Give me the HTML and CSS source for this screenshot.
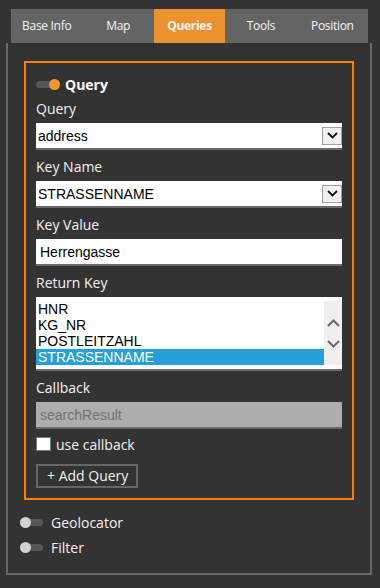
FILE: index.html
```html
<!DOCTYPE html>
<html lang="en">
<head>
    <meta charset="UTF-8">
    <meta name="viewport" content="width=device-width, initial-scale=1.0">
    <title>Queries</title>
    <link rel="stylesheet" href="styles.css">
</head>
<body>
<div class="settings">
    <div class="tabs">
        <div class="tab">Base Info</div>
        <div class="tab">Map</div>
        <div class="tab active">Queries</div>
        <div class="tab">Tools</div>
        <div class="tab">Position</div>
    </div>

    <div class="panel">
        <div class="query-box">
            <div class="section-title">
                <span class="toggle on"></span>
                Query
            </div>

            <div class="field-label first">Query</div>
            <div class="select">
                <span>address</span>
                <span class="select-arrow">
                    <svg width="11" height="7" viewBox="0 0 11 7"><path d="M1 1l4.5 4.5L10 1" fill="none" stroke="#111" stroke-width="1.8"/></svg>
                </span>
            </div>

            <div class="field-label">Key Name</div>
            <div class="select">
                <span>STRASSENNAME</span>
                <span class="select-arrow">
                    <svg width="11" height="7" viewBox="0 0 11 7"><path d="M1 1l4.5 4.5L10 1" fill="none" stroke="#111" stroke-width="1.8"/></svg>
                </span>
            </div>

            <div class="field-label">Key Value</div>
            <div class="input">Herrengasse</div>

            <div class="field-label">Return Key</div>
            <div class="listbox">
                <div class="list-items">
                    <div class="list-item">HNR</div>
                    <div class="list-item">KG_NR</div>
                    <div class="list-item">POSTLEITZAHL</div>
                    <div class="list-item selected">STRASSENNAME</div>
                </div>
                <div class="list-scroll">
                    <svg width="13" height="8" viewBox="0 0 13 8"><path d="M1 7l5.5-5.5L12 7" fill="none" stroke="#6a6a6a" stroke-width="2"/></svg>
                    <svg width="13" height="8" viewBox="0 0 13 8"><path d="M1 1l5.5 5.5L12 1" fill="none" stroke="#6a6a6a" stroke-width="2"/></svg>
                </div>
            </div>

            <div class="field-label">Callback</div>
            <div class="input disabled">searchResult</div>

            <div class="check-row">
                <span class="checkbox"></span>
                use callback
            </div>

            <div class="add-button">+ Add Query</div>
        </div>

        <div class="switch-row first">
            <span class="toggle"></span>
            Geolocator
        </div>
        <div class="switch-row">
            <span class="toggle"></span>
            Filter
        </div>
    </div>
</div>
</body>
</html>
```

FILE: styles.css
```css
* {
    margin: 0;
    padding: 0;
    box-sizing: border-box;
}

body {
    background: #333;
    font-family: "Open Sans", "Noto Sans", sans-serif;
    color: #f2f2f2;
}

.settings {
    padding-top: 9px;
}

.tabs {
    display: flex;
    height: 34px;
    margin: 0 12px 0 11px;
    background: #646464;
}

.tab {
    flex: 1;
    text-align: center;
    line-height: 34px;
    font-size: 12px;
    letter-spacing: -0.3px;
    color: #f4f4f4;
}

.tab.active {
    background: #ec932f;
    font-weight: 700;
}

.panel {
    margin: 0 8px 0 6px;
    border: 2px solid #686868;
    border-top: none;
    padding: 18px 16px 13px;
}

.query-box {
    border: 2px solid #ff8000;
    padding: 11px 10px 10px;
}

.section-title {
    display: flex;
    align-items: center;
    gap: 5px;
    height: 20px;
    font-size: 14px;
    font-weight: 700;
    color: #fff;
}

/* small on/off switch */
.toggle {
    position: relative;
    display: inline-block;
    width: 24px;
    height: 11px;
}

.toggle::before {
    content: "";
    position: absolute;
    left: 0;
    right: 1px;
    top: 2px;
    height: 7px;
    border-radius: 4px;
    background: #575757;
}

.toggle::after {
    content: "";
    position: absolute;
    left: 0;
    top: 0;
    width: 11px;
    height: 11px;
    border-radius: 50%;
    background: #d2d2d2;
}

.toggle.on::after {
    left: auto;
    right: 0;
    background: #f0952f;
}

.field-label {
    height: 31px;
    padding: 7px 0 4px;
    line-height: 20px;
    font-size: 14px;
}

.field-label.first {
    height: 29px;
    padding-top: 5px;
}

.select,
.input {
    display: flex;
    align-items: center;
    justify-content: space-between;
    height: 27px;
    background: #fff;
    border-bottom: 2px solid #6a6a6a;
    font-family: "Liberation Sans", Arial, sans-serif;
    font-size: 14px;
    color: #000;
}

.select {
    padding-left: 2px;
}

.input {
    padding-left: 4px;
}

.input.disabled {
    background: #adadad;
    color: #737373;
}

.select-arrow {
    display: flex;
    align-items: center;
    justify-content: center;
    width: 20px;
    height: 18px;
    background: #f0f0f0;
    border: 1px solid #a0a0a0;
}

.listbox {
    display: flex;
    height: 74px;
    padding: 4px 0 4px;
    background: #fff;
    border-bottom: 2px solid #6a6a6a;
    font-family: "Liberation Sans", Arial, sans-serif;
    font-size: 14px;
    color: #000;
}

.list-items {
    flex: 1;
}

.list-item {
    height: 16px;
    line-height: 16px;
    padding-left: 2px;
}

.list-item.selected {
    background: #26a0da;
    color: #fff;
}

.list-scroll {
    width: 18px;
    background: #efefef;
    display: flex;
    flex-direction: column;
    align-items: center;
    justify-content: center;
    gap: 13px;
}

.check-row {
    display: flex;
    align-items: center;
    gap: 5px;
    height: 20px;
    margin-top: 5px;
    font-size: 14px;
}

.checkbox {
    width: 15px;
    height: 14px;
    background: #fff;
    border: 1px solid #777;
}

.add-button {
    display: inline-block;
    height: 24px;
    margin-top: 10px;
    padding: 0 8px 0 9px;
    border: 2px solid #666;
    line-height: 20px;
    font-size: 14px;
}

.switch-row {
    display: flex;
    align-items: center;
    gap: 7px;
    height: 25px;
    margin-left: -4px;
    font-size: 14px;
}

.switch-row.first {
    margin-top: 10px;
}
```
